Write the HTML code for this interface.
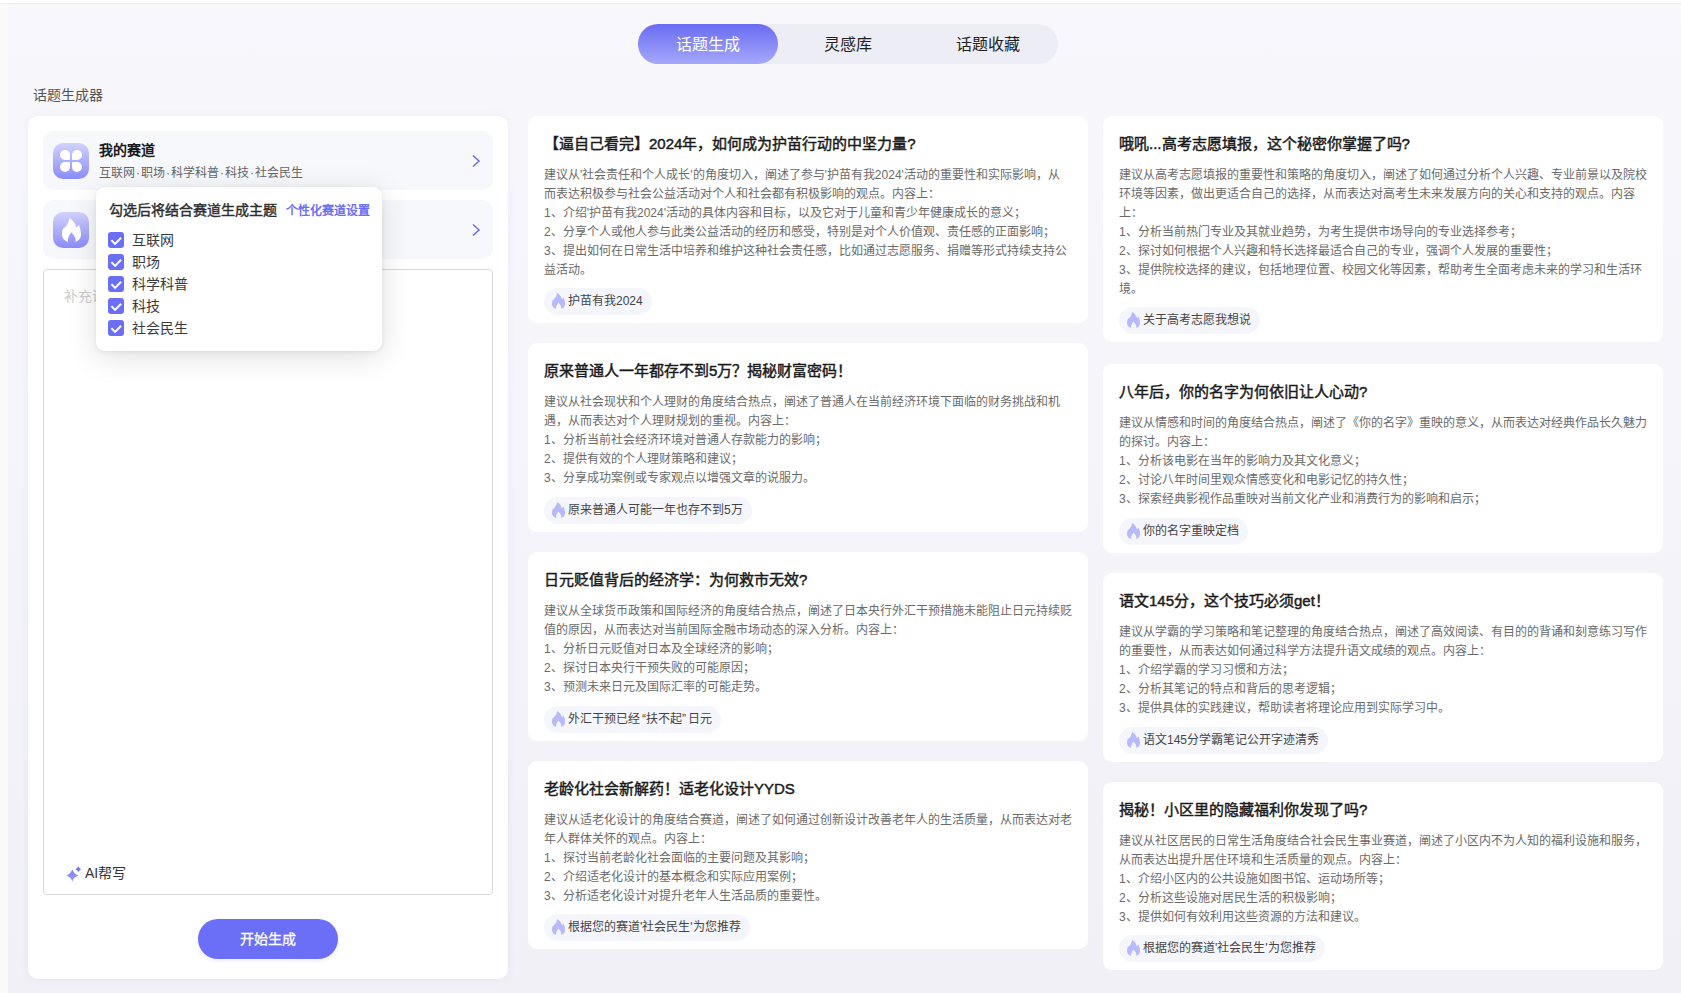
<!DOCTYPE html>
<html lang="zh-CN">
<head>
<meta charset="utf-8">
<style>
*{box-sizing:border-box;margin:0;padding:0}
html,body{width:1681px;height:993px;overflow:hidden;background:#fff;font-family:"Liberation Sans",sans-serif;}
.abs{position:absolute}
#topline{left:0;top:3px;width:1681px;height:1px;background:#eeeeee}
#lstrip{left:0;top:4px;width:8px;height:989px;background:#fafafa}
#main{left:8px;top:4px;width:1673px;height:989px;background:linear-gradient(180deg,#f7f7fc 0%,#f4f4fa 50%,#f1f0f6 100%)}
#tabs{left:638px;top:24px;width:420px;height:40px;border-radius:20px;background:#ededf5}
.tab{position:absolute;top:0;width:140px;height:40px;line-height:42px;text-align:center;font-size:16px;color:#222}
.tab.on{background:linear-gradient(180deg,#6a6bf1 0%,#a6a8fb 100%);color:#fff;border-radius:20px}
#lbl{left:33px;top:85px;font-size:14px;line-height:20px;color:#555}
#panel{left:28px;top:116px;width:480px;height:863px;background:#fff;border-radius:10px;box-shadow:0 0 8px rgba(120,120,190,0.08)}
.row{position:absolute;left:43px;width:450px;height:59px;border-radius:10px;background:#f7f8fc}
.ico{position:absolute;left:10px;top:12px;width:36px;height:36px;border-radius:10px;background:linear-gradient(180deg,#d2d2fd 0%,#8b8cf8 100%)}
.rt{position:absolute;left:56px;top:9px;font-size:14px;font-weight:bold;color:#1a1a1a;line-height:20px}
.rs{position:absolute;left:56px;top:33px;font-size:12px;color:#666;line-height:18px;white-space:nowrap}
.pt{position:absolute;width:10px;height:10px;background:#fff}
.dot{font-weight:normal;padding:0 1px}
.chev{position:absolute;left:428px;top:23px}
#ta{left:43px;top:269px;width:450px;height:626px;border:1px solid #d9d9d9;border-radius:4px;background:#fff}
#ph{left:64px;top:286px;font-size:14px;line-height:20px;color:#cdcdcd}
#ai{left:85px;top:863px;font-size:14px;line-height:20px;color:#333}
#btn{left:198px;top:919px;width:140px;height:40px;border-radius:20px;background:#6b6ff7;color:#fff;font-size:14px;line-height:40px;text-align:center;-webkit-text-stroke:0.3px #fff;box-shadow:0 2px 4px rgba(107,111,246,0.12)}
#pop{left:96px;top:187px;width:286px;height:164px;background:#fff;border-radius:9px;box-shadow:0 6px 30px rgba(0,0,0,0.13),0 1px 5px rgba(0,0,0,0.07)}
#pt{left:13px;top:13px;font-size:14px;font-weight:normal;-webkit-text-stroke:0.4px #2d2d2d;color:#2d2d2d;line-height:20px;white-space:nowrap}
#pl{left:190px;top:15px;font-size:12px;font-weight:bold;color:#6b70f6;line-height:18px;white-space:nowrap}
.cb{position:absolute;left:12px;width:16px;height:16px;border-radius:3px;background:#6b6ff7}
.cl{position:absolute;left:36px;font-size:14px;color:#3a3a3a;line-height:20px;white-space:nowrap}
.card{position:absolute;width:560px;background:#fff;border-radius:9px}
.ct{position:absolute;left:16px;top:17px;font-size:15px;font-weight:normal;-webkit-text-stroke:0.45px #1a1a1a;color:#1a1a1a;line-height:22px;white-space:nowrap}
.cbody{position:absolute;left:16px;top:50px;font-size:12px;color:#6a6a6a;line-height:19px;white-space:nowrap}
.tag{position:absolute;left:16px;bottom:8px;height:27px;border-radius:14px;background:#f5f6fb;padding:0 9px 0 24px;font-size:12px;line-height:27px;color:#444;white-space:nowrap}
.tag svg{position:absolute;left:8px;top:5px}
</style>
</head>
<body>
<div class="abs" id="topline"></div>
<div class="abs" id="lstrip"></div>
<div class="abs" id="main"></div>

<div class="abs" id="tabs">
  <div class="tab on" style="left:0">话题生成</div>
  <div class="tab" style="left:140px">灵感库</div>
  <div class="tab" style="left:280px">话题收藏</div>
</div>

<div class="abs" id="lbl">话题生成器</div>
<div class="abs" id="panel"></div>

<div class="row" style="top:131px">
  <div class="ico"><i class="pt" style="left:7px;top:7px;border-radius:5px 5px 1px 5px"></i><i class="pt" style="left:19px;top:7px;border-radius:5px 5px 5px 1px"></i><i class="pt" style="left:7px;top:19px;border-radius:5px 1px 5px 5px"></i><i class="pt" style="left:19px;top:19px;border-radius:1px 5px 5px 5px"></i></div>
  <div class="rt">我的赛道</div>
  <div class="rs">互联网<b class="dot">·</b>职场<b class="dot">·</b>科学科普<b class="dot">·</b>科技<b class="dot">·</b>社会民生</div>
  <svg class="chev" width="10" height="14" viewBox="0 0 10 14"><path d="M2 1.5 L8 7 L2 12.5" fill="none" stroke="#6b6bf0" stroke-width="1.5"/></svg>
</div>
<div class="row" style="top:200px">
  <div class="ico"><svg width="36" height="36" viewBox="0 0 36 36" style="position:absolute;left:0;top:0"><path d="M16.3 6.3 C16.4 10 14 12.8 11.9 15.6 L10.1 16.6 C9.3 18.4 9 20.3 9 22.5 C9 26 11.5 29 15.2 29.8 C14.8 28.5 14.8 27 15.3 25.8 C16 23.8 17.2 21.8 18.4 20.3 C19.8 22 21.5 24 22.3 26 C22.7 27.2 22.8 28.5 22.4 29.8 C25.8 29 28 26 28 22.5 C28 19 27 15.5 25.8 12.8 C25.2 14 24.4 14.8 23.4 15.5 C22.5 11.5 19.8 8 16.3 6.3 Z" fill="#fff"/></svg></div>
  <svg class="chev" width="10" height="14" viewBox="0 0 10 14"><path d="M2 1.5 L8 7 L2 12.5" fill="none" stroke="#6b6bf0" stroke-width="1.5"/></svg>
</div>

<div class="abs" id="ta"></div>
<div class="abs" id="ph">补充话题</div>
<svg class="abs" style="left:64px;top:866px" width="18" height="18" viewBox="0 0 18 18"><defs><linearGradient id="sg" x1="0" y1="0" x2="0" y2="1"><stop offset="0" stop-color="#7d7ef6"/><stop offset="1" stop-color="#9c9efa"/></linearGradient></defs><path d="M8.3 3.3 Q9.7 8 14.4 9.4 Q9.7 10.8 8.3 15.8 Q6.9 10.8 2.2 9.4 Q6.9 8 8.3 3.3 Z" fill="url(#sg)"/><path d="M14.3 0.3 Q15.2 2.3 17.1 3.2 Q15.2 4.1 14.3 6.1 Q13.4 4.1 11.5 3.2 Q13.4 2.3 14.3 0.3 Z" fill="#7172f4"/></svg>
<div class="abs" id="ai">AI帮写</div>
<div class="abs" id="btn">开始生成</div>

<div class="abs" id="pop">
  <div class="abs" id="pt">勾选后将结合赛道生成主题</div>
  <div class="abs" id="pl">个性化赛道设置</div>
  <div class="cb" style="top:45px"><svg width="16" height="16" viewBox="0 0 16 16"><path d="M3.4 8.1 L7.1 11.9 L13.1 5.8" fill="none" stroke="#fff" stroke-width="2"/></svg></div><div class="cl" style="top:43px">互联网</div>
  <div class="cb" style="top:67px"><svg width="16" height="16" viewBox="0 0 16 16"><path d="M3.4 8.1 L7.1 11.9 L13.1 5.8" fill="none" stroke="#fff" stroke-width="2"/></svg></div><div class="cl" style="top:65px">职场</div>
  <div class="cb" style="top:89px"><svg width="16" height="16" viewBox="0 0 16 16"><path d="M3.4 8.1 L7.1 11.9 L13.1 5.8" fill="none" stroke="#fff" stroke-width="2"/></svg></div><div class="cl" style="top:87px">科学科普</div>
  <div class="cb" style="top:111px"><svg width="16" height="16" viewBox="0 0 16 16"><path d="M3.4 8.1 L7.1 11.9 L13.1 5.8" fill="none" stroke="#fff" stroke-width="2"/></svg></div><div class="cl" style="top:109px">科技</div>
  <div class="cb" style="top:133px"><svg width="16" height="16" viewBox="0 0 16 16"><path d="M3.4 8.1 L7.1 11.9 L13.1 5.8" fill="none" stroke="#fff" stroke-width="2"/></svg></div><div class="cl" style="top:131px">社会民生</div>
</div>

<!-- CARDS -->
<div class="card" style="left:528px;top:116px;height:207px">
  <div class="ct">【逼自己看完】2024年，如何成为护苗行动的中坚力量?</div>
  <div class="cbody">建议从'社会责任和个人成长'的角度切入，阐述了参与'护苗有我2024'活动的重要性和实际影响，从<br>而表达积极参与社会公益活动对个人和社会都有积极影响的观点。内容上：<br>1、介绍'护苗有我2024'活动的具体内容和目标，以及它对于儿童和青少年健康成长的意义；<br>2、分享个人或他人参与此类公益活动的经历和感受，特别是对个人价值观、责任感的正面影响；<br>3、提出如何在日常生活中培养和维护这种社会责任感，比如通过志愿服务、捐赠等形式持续支持公<br>益活动。</div>
  <div class="tag"><svg width="13" height="16" viewBox="9 6.3 19 23.5" preserveAspectRatio="none"><path d="M16.3 6.3 C16.4 10 14 12.8 11.9 15.6 L10.1 16.6 C9.3 18.4 9 20.3 9 22.5 C9 26 11.5 29 15.2 29.8 C14.8 28.5 14.8 27 15.3 25.8 C16 23.8 17.2 21.8 18.4 20.3 C19.8 22 21.5 24 22.3 26 C22.7 27.2 22.8 28.5 22.4 29.8 C25.8 29 28 26 28 22.5 C28 19 27 15.5 25.8 12.8 C25.2 14 24.4 14.8 23.4 15.5 C22.5 11.5 19.8 8 16.3 6.3 Z" fill="#b8b8fc"/></svg>护苗有我2024</div>
</div>
<div class="card" style="left:528px;top:343px;height:189px">
  <div class="ct">原来普通人一年都存不到5万？揭秘财富密码！</div>
  <div class="cbody">建议从社会现状和个人理财的角度结合热点，阐述了普通人在当前经济环境下面临的财务挑战和机<br>遇，从而表达对个人理财规划的重视。内容上：<br>1、分析当前社会经济环境对普通人存款能力的影响；<br>2、提供有效的个人理财策略和建议；<br>3、分享成功案例或专家观点以增强文章的说服力。</div>
  <div class="tag"><svg width="13" height="16" viewBox="9 6.3 19 23.5" preserveAspectRatio="none"><path d="M16.3 6.3 C16.4 10 14 12.8 11.9 15.6 L10.1 16.6 C9.3 18.4 9 20.3 9 22.5 C9 26 11.5 29 15.2 29.8 C14.8 28.5 14.8 27 15.3 25.8 C16 23.8 17.2 21.8 18.4 20.3 C19.8 22 21.5 24 22.3 26 C22.7 27.2 22.8 28.5 22.4 29.8 C25.8 29 28 26 28 22.5 C28 19 27 15.5 25.8 12.8 C25.2 14 24.4 14.8 23.4 15.5 C22.5 11.5 19.8 8 16.3 6.3 Z" fill="#b8b8fc"/></svg>原来普通人可能一年也存不到5万</div>
</div>
<div class="card" style="left:528px;top:552px;height:189px">
  <div class="ct">日元贬值背后的经济学：为何救市无效?</div>
  <div class="cbody">建议从全球货币政策和国际经济的角度结合热点，阐述了日本央行外汇干预措施未能阻止日元持续贬<br>值的原因，从而表达对当前国际金融市场动态的深入分析。内容上：<br>1、分析日元贬值对日本及全球经济的影响；<br>2、探讨日本央行干预失败的可能原因；<br>3、预测未来日元及国际汇率的可能走势。</div>
  <div class="tag"><svg width="13" height="16" viewBox="9 6.3 19 23.5" preserveAspectRatio="none"><path d="M16.3 6.3 C16.4 10 14 12.8 11.9 15.6 L10.1 16.6 C9.3 18.4 9 20.3 9 22.5 C9 26 11.5 29 15.2 29.8 C14.8 28.5 14.8 27 15.3 25.8 C16 23.8 17.2 21.8 18.4 20.3 C19.8 22 21.5 24 22.3 26 C22.7 27.2 22.8 28.5 22.4 29.8 C25.8 29 28 26 28 22.5 C28 19 27 15.5 25.8 12.8 C25.2 14 24.4 14.8 23.4 15.5 C22.5 11.5 19.8 8 16.3 6.3 Z" fill="#b8b8fc"/></svg>外汇干预已经<span style="padding-left:2px">“</span>扶不起<span style="padding-right:2px">”</span>日元</div>
</div>
<div class="card" style="left:528px;top:761px;height:188px">
  <div class="ct">老龄化社会新解药！适老化设计YYDS</div>
  <div class="cbody">建议从适老化设计的角度结合赛道，阐述了如何通过创新设计改善老年人的生活质量，从而表达对老<br>年人群体关怀的观点。内容上：<br>1、探讨当前老龄化社会面临的主要问题及其影响；<br>2、介绍适老化设计的基本概念和实际应用案例；<br>3、分析适老化设计对提升老年人生活品质的重要性。</div>
  <div class="tag"><svg width="13" height="16" viewBox="9 6.3 19 23.5" preserveAspectRatio="none"><path d="M16.3 6.3 C16.4 10 14 12.8 11.9 15.6 L10.1 16.6 C9.3 18.4 9 20.3 9 22.5 C9 26 11.5 29 15.2 29.8 C14.8 28.5 14.8 27 15.3 25.8 C16 23.8 17.2 21.8 18.4 20.3 C19.8 22 21.5 24 22.3 26 C22.7 27.2 22.8 28.5 22.4 29.8 C25.8 29 28 26 28 22.5 C28 19 27 15.5 25.8 12.8 C25.2 14 24.4 14.8 23.4 15.5 C22.5 11.5 19.8 8 16.3 6.3 Z" fill="#b8b8fc"/></svg>根据您的赛道'社会民生'为您推荐</div>
</div>
<div class="card" style="left:1103px;top:116px;height:226px">
  <div class="ct">哦吼...高考志愿填报，这个秘密你掌握了吗?</div>
  <div class="cbody">建议从高考志愿填报的重要性和策略的角度切入，阐述了如何通过分析个人兴趣、专业前景以及院校<br>环境等因素，做出更适合自己的选择，从而表达对高考生未来发展方向的关心和支持的观点。内容<br>上：<br>1、分析当前热门专业及其就业趋势，为考生提供市场导向的专业选择参考；<br>2、探讨如何根据个人兴趣和特长选择最适合自己的专业，强调个人发展的重要性；<br>3、提供院校选择的建议，包括地理位置、校园文化等因素，帮助考生全面考虑未来的学习和生活环<br>境。</div>
  <div class="tag"><svg width="13" height="16" viewBox="9 6.3 19 23.5" preserveAspectRatio="none"><path d="M16.3 6.3 C16.4 10 14 12.8 11.9 15.6 L10.1 16.6 C9.3 18.4 9 20.3 9 22.5 C9 26 11.5 29 15.2 29.8 C14.8 28.5 14.8 27 15.3 25.8 C16 23.8 17.2 21.8 18.4 20.3 C19.8 22 21.5 24 22.3 26 C22.7 27.2 22.8 28.5 22.4 29.8 C25.8 29 28 26 28 22.5 C28 19 27 15.5 25.8 12.8 C25.2 14 24.4 14.8 23.4 15.5 C22.5 11.5 19.8 8 16.3 6.3 Z" fill="#b8b8fc"/></svg>关于高考志愿我想说</div>
</div>
<div class="card" style="left:1103px;top:364px;height:189px">
  <div class="ct">八年后，你的名字为何依旧让人心动?</div>
  <div class="cbody">建议从情感和时间的角度结合热点，阐述了《你的名字》重映的意义，从而表达对经典作品长久魅力<br>的探讨。内容上：<br>1、分析该电影在当年的影响力及其文化意义；<br>2、讨论八年时间里观众情感变化和电影记忆的持久性；<br>3、探索经典影视作品重映对当前文化产业和消费行为的影响和启示；</div>
  <div class="tag"><svg width="13" height="16" viewBox="9 6.3 19 23.5" preserveAspectRatio="none"><path d="M16.3 6.3 C16.4 10 14 12.8 11.9 15.6 L10.1 16.6 C9.3 18.4 9 20.3 9 22.5 C9 26 11.5 29 15.2 29.8 C14.8 28.5 14.8 27 15.3 25.8 C16 23.8 17.2 21.8 18.4 20.3 C19.8 22 21.5 24 22.3 26 C22.7 27.2 22.8 28.5 22.4 29.8 C25.8 29 28 26 28 22.5 C28 19 27 15.5 25.8 12.8 C25.2 14 24.4 14.8 23.4 15.5 C22.5 11.5 19.8 8 16.3 6.3 Z" fill="#b8b8fc"/></svg>你的名字重映定档</div>
</div>
<div class="card" style="left:1103px;top:573px;height:189px">
  <div class="ct">语文145分，这个技巧必须get！</div>
  <div class="cbody">建议从学霸的学习策略和笔记整理的角度结合热点，阐述了高效阅读、有目的的背诵和刻意练习写作<br>的重要性，从而表达如何通过科学方法提升语文成绩的观点。内容上：<br>1、介绍学霸的学习习惯和方法；<br>2、分析其笔记的特点和背后的思考逻辑；<br>3、提供具体的实践建议，帮助读者将理论应用到实际学习中。</div>
  <div class="tag"><svg width="13" height="16" viewBox="9 6.3 19 23.5" preserveAspectRatio="none"><path d="M16.3 6.3 C16.4 10 14 12.8 11.9 15.6 L10.1 16.6 C9.3 18.4 9 20.3 9 22.5 C9 26 11.5 29 15.2 29.8 C14.8 28.5 14.8 27 15.3 25.8 C16 23.8 17.2 21.8 18.4 20.3 C19.8 22 21.5 24 22.3 26 C22.7 27.2 22.8 28.5 22.4 29.8 C25.8 29 28 26 28 22.5 C28 19 27 15.5 25.8 12.8 C25.2 14 24.4 14.8 23.4 15.5 C22.5 11.5 19.8 8 16.3 6.3 Z" fill="#b8b8fc"/></svg>语文145分学霸笔记公开字迹清秀</div>
</div>
<div class="card" style="left:1103px;top:782px;height:188px">
  <div class="ct">揭秘！小区里的隐藏福利你发现了吗?</div>
  <div class="cbody">建议从社区居民的日常生活角度结合社会民生事业赛道，阐述了小区内不为人知的福利设施和服务，<br>从而表达出提升居住环境和生活质量的观点。内容上：<br>1、介绍小区内的公共设施如图书馆、运动场所等；<br>2、分析这些设施对居民生活的积极影响；<br>3、提供如何有效利用这些资源的方法和建议。</div>
  <div class="tag"><svg width="13" height="16" viewBox="9 6.3 19 23.5" preserveAspectRatio="none"><path d="M16.3 6.3 C16.4 10 14 12.8 11.9 15.6 L10.1 16.6 C9.3 18.4 9 20.3 9 22.5 C9 26 11.5 29 15.2 29.8 C14.8 28.5 14.8 27 15.3 25.8 C16 23.8 17.2 21.8 18.4 20.3 C19.8 22 21.5 24 22.3 26 C22.7 27.2 22.8 28.5 22.4 29.8 C25.8 29 28 26 28 22.5 C28 19 27 15.5 25.8 12.8 C25.2 14 24.4 14.8 23.4 15.5 C22.5 11.5 19.8 8 16.3 6.3 Z" fill="#b8b8fc"/></svg>根据您的赛道'社会民生'为您推荐</div>
</div>
</body>
</html>
